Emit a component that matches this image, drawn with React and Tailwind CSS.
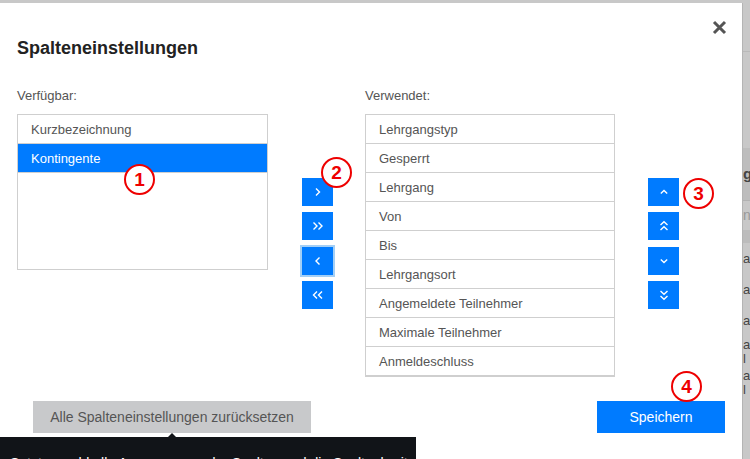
const available = ["Kurzbezeichnung", "Kontingente"];
const used = [
  "Lehrgangstyp",
  "Gesperrt",
  "Lehrgang",
  "Von",
  "Bis",
  "Lehrgangsort",
  "Angemeldete Teilnehmer",
  "Maximale Teilnehmer",
  "Anmeldeschluss",
];

const Chevron = ({ dir, double }) => {
  const shapes = {
    right: double
      ? ["1.5,2.5 5,6 1.5,9.5", "6.5,2.5 10,6 6.5,9.5"]
      : ["4,2.5 7.5,6 4,9.5"],
    left: double
      ? ["5,2.5 1.5,6 5,9.5", "10,2.5 6.5,6 10,9.5"]
      : ["7.5,2.5 4,6 7.5,9.5"],
    up: double
      ? ["2.5,5 6,1.8 9.5,5", "2.5,10 6,6.8 9.5,10"]
      : ["2.8,7.5 6,4.5 9.2,7.5"],
    down: double
      ? ["2.5,2 6,5.2 9.5,2", "2.5,7 6,10.2 9.5,7"]
      : ["2.8,4.5 6,7.5 9.2,4.5"],
  };
  return (
    <svg width="12" height="12" viewBox="0 0 12 12" fill="none">
      {shapes[dir].map((p) => (
        <polyline key={p} points={p} stroke="white" strokeWidth="1.4" />
      ))}
    </svg>
  );
};

const MoveButton = ({ dir, double, focused, className = "" }) => (
  <button
    className={`flex h-[28px] w-[31px] items-center justify-center bg-[#007bff] ${
      focused ? "ring-2 ring-[#a3cff6]" : ""
    } ${className}`}
  >
    <Chevron dir={dir} double={double} />
  </button>
);

const Marker = ({ n, className }) => (
  <div
    className={`absolute flex h-[31px] w-[31px] items-center justify-center rounded-full border-[2.5px] border-[#ee0000] bg-white text-[19px] font-bold leading-none text-[#ee0000] ${className}`}
  >
    {n}
  </div>
);

const ListRow = ({ label, active }) => (
  <div
    className={`flex h-[29px] items-center border-b border-[#cfcfcf] pl-[13px] pt-px text-[13px] ${
      active ? "bg-[#007bff] text-white" : "text-[#555]"
    }`}
  >
    {label}
  </div>
);

// what shows of the page behind the dialog
const BackStrip = () => (
  <div className="flex w-[8px] flex-col overflow-hidden border-l border-[#b4b4b4] bg-[#c8c8c8] text-[#444]">
    <div className="h-[49px] border-b border-[#b9b9b9]" />
    <div className="h-[96px]" />
    <div className="flex h-[53px] items-center border-b border-[#b2b2b2] bg-[#bdbdbd] text-[15px] font-bold">
      g
    </div>
    <div className="flex h-[29px] items-center text-[14px] text-[#999]">n</div>
    <div className="h-[13px] bg-[#bcbcbc]" />
    {[0, 1, 2, 3, 4].map((i) => (
      <div key={i} className="flex h-[31px] flex-col justify-center text-[13px] leading-[14px]">
        {i > 2 ? "a\nl" : "a"}
      </div>
    ))}
  </div>
);

export default function App() {
  return (
    <div className="relative h-[459px] w-[750px] overflow-hidden bg-[#c8c8c8] font-['Liberation_Sans',Arial,sans-serif]">
      <div className="flex h-full pt-[3px]">
        <div className="relative w-[742px] bg-white px-[17px] pt-[34px]">
          <button className="absolute right-[15px] top-[17px]">
            <svg width="15" height="15" viewBox="0 0 15 15">
              <path d="M2 2 L13 13 M13 2 L2 13" stroke="#555" strokeWidth="3" />
            </svg>
          </button>

          <h2 className="text-[18px] font-bold leading-[22px] text-[#222]">
            Spalteneinstellungen
          </h2>

          <div className="mt-[29px] flex items-start">
            <div className="w-[251px]">
              <div className="text-[13px] leading-[15px] text-[#555]">Verfügbar:</div>
              <div className="mt-[11px] h-[156px] border border-[#cfcfcf]">
                {available.map((a, i) => (
                  <ListRow key={a} label={a} active={i === 1} />
                ))}
              </div>
            </div>

            <div className="ml-[34px] flex flex-col pt-[90px]">
              <MoveButton dir="right" />
              <MoveButton dir="right" double className="mt-[6px]" />
              <MoveButton dir="left" focused className="mt-[7px]" />
              <MoveButton dir="left" double className="mt-[6px]" />
            </div>

            <div className="ml-[32px] w-[250px]">
              <div className="text-[13px] leading-[15px] text-[#555]">Verwendet:</div>
              <div className="mt-[11px] border border-[#cfcfcf]">
                {used.map((u) => (
                  <ListRow key={u} label={u} />
                ))}
              </div>
            </div>

            <div className="ml-[33px] flex flex-col pt-[90px]">
              <MoveButton dir="up" />
              <MoveButton dir="up" double className="mt-[6px]" />
              <MoveButton dir="down" className="mt-[7px]" />
              <MoveButton dir="down" double className="mt-[6px]" />
            </div>
          </div>

          <div className="mt-[24px] flex items-center justify-between">
            <button className="ml-[16px] h-[32px] w-[278px] bg-[#c8c9cb] text-[14px] text-[#555]">
              Alle Spalteneinstellungen zurücksetzen
            </button>
            <button className="h-[32px] w-[128px] bg-[#007bff] text-[14px] text-white">
              Speichern
            </button>
          </div>
        </div>
        <BackStrip />
      </div>

      <div className="absolute left-0 top-[437px] h-[40px] w-[416px] bg-[#111418] pl-[10px] pt-[17px] text-[14px] leading-[18px] whitespace-nowrap text-white">
        <div className="absolute -top-[4px] left-[168px] h-0 w-0 border-x-[4px] border-b-[4px] border-x-transparent border-b-[#111418]" />
        Setzt sowohl alle Anpassungen der Spalten und die Spaltenbreite zurück
      </div>

      <Marker n="1" className="left-[124px] top-[164px]" />
      <Marker n="2" className="left-[321px] top-[157px]" />
      <Marker n="3" className="left-[683px] top-[178px]" />
      <Marker n="4" className="left-[671px] top-[371px]" />
    </div>
  );
}
